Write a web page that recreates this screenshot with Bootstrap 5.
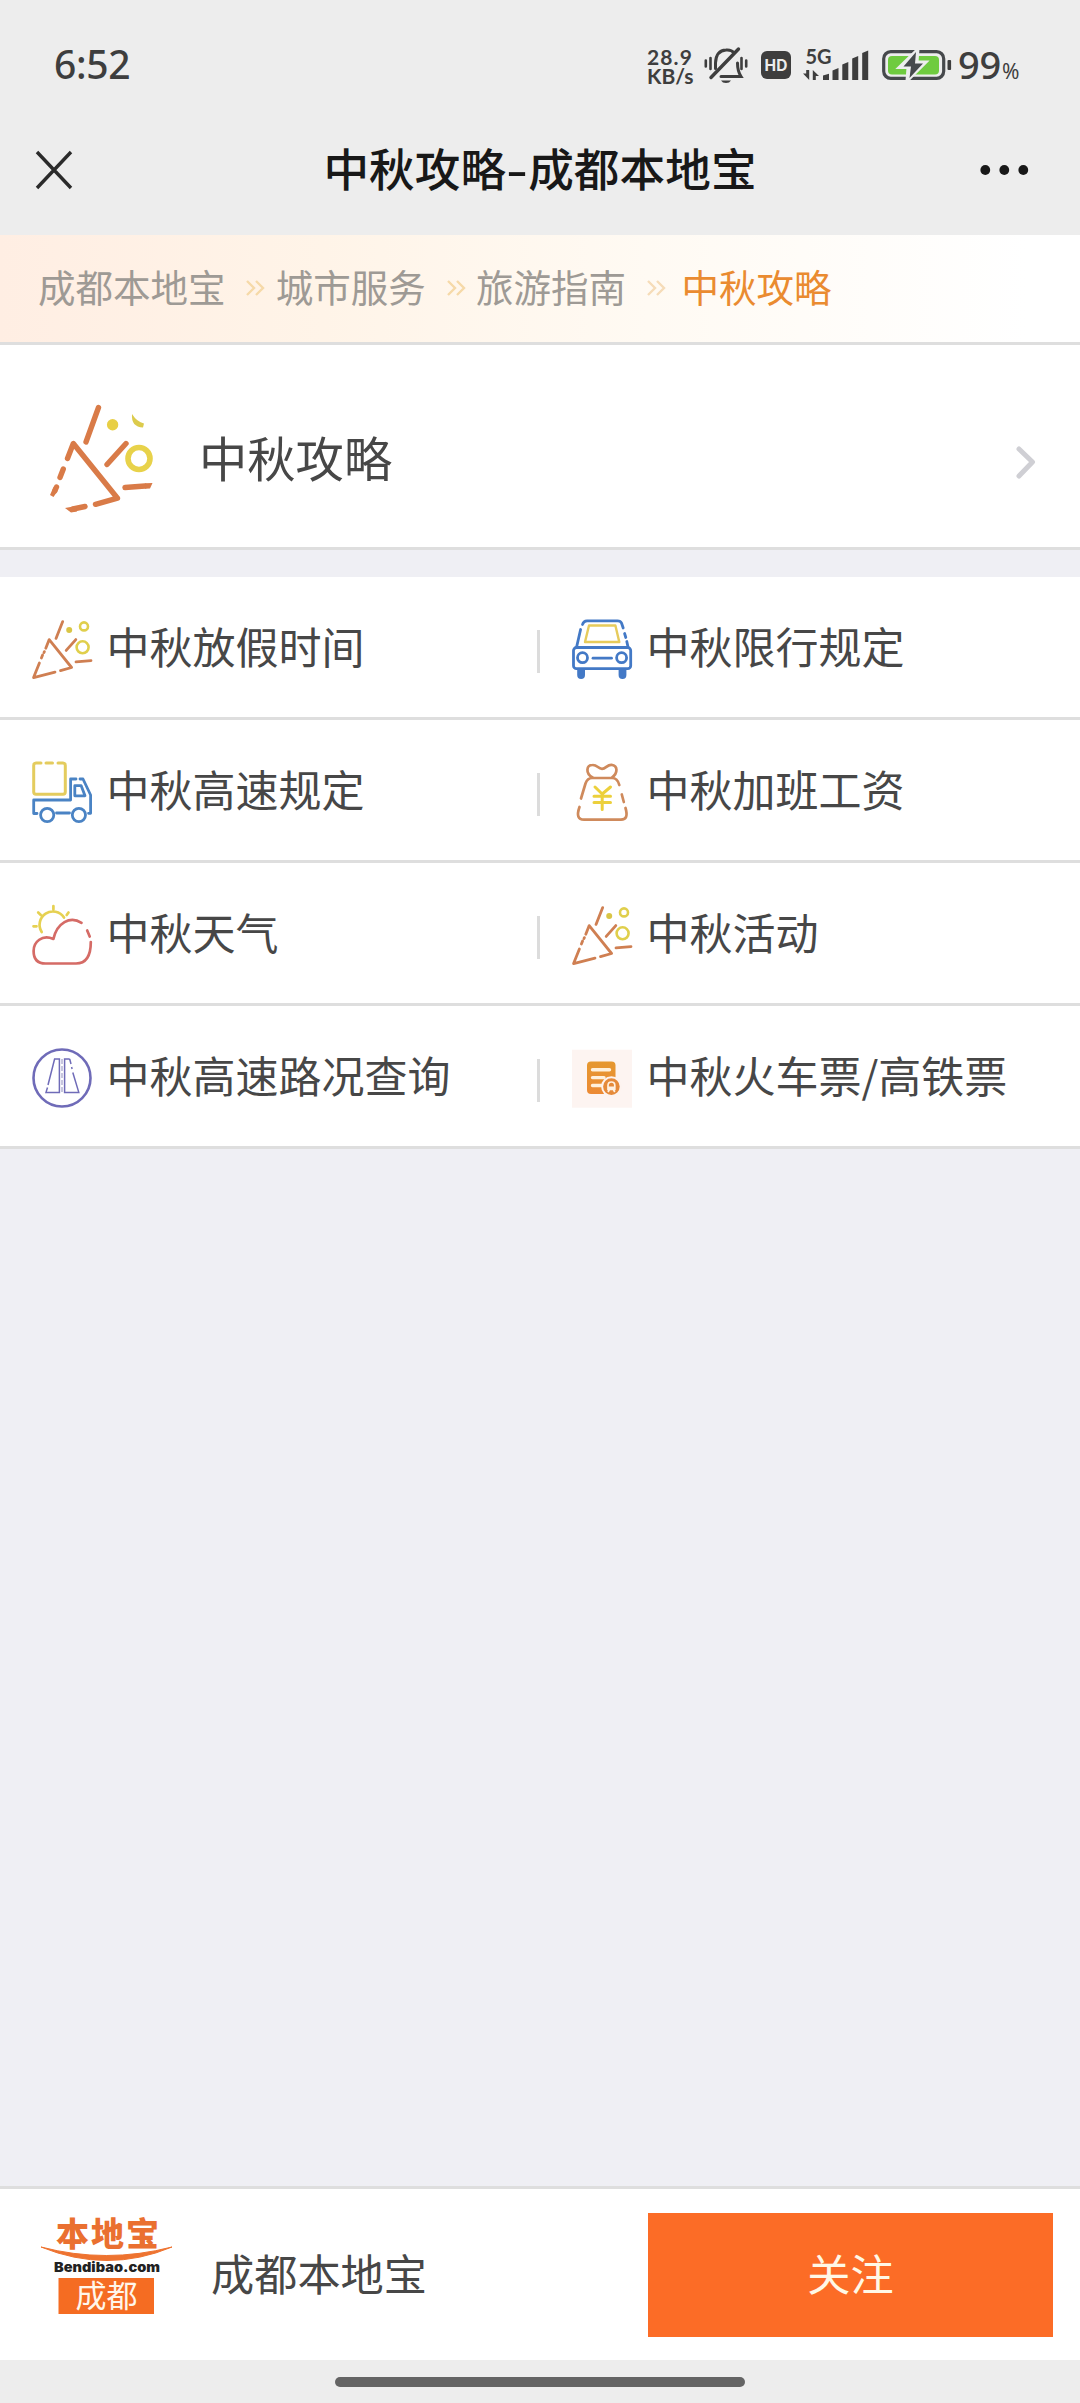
<!DOCTYPE html>
<html lang="zh-CN">
<head>
<meta charset="utf-8">
<title>中秋攻略-成都本地宝</title>
<link href="https://cdn.jsdelivr.net/npm/bootstrap@5.3.0/dist/css/bootstrap.min.css" rel="stylesheet">
<style>
  body{font-family:"Noto Sans CJK SC","Noto Sans",sans-serif;background:#efeff4;color:#474747;width:1080px;height:2403px;overflow:hidden;line-height:1}
  svg{display:block;overflow:visible;flex:none}
  .line-b{border-bottom:3px solid #dedede}
  .topbar{background:#ededed;height:235px}
  .status{height:130px;padding:0 59px 0 54px;color:#3e3e3e;font-family:Lato,"Noto Sans",sans-serif;font-weight:700}
  .clock{font-size:39px;font-family:"Noto Sans",sans-serif;font-weight:500;letter-spacing:-.3px;margin-bottom:3px}
  .speed{font-size:21px;line-height:19px;width:58px;padding-left:1px;padding-top:1px}
  .speed div{height:19px}
  .rate{letter-spacing:1.1px}
  .hd{margin-left:13px}
  .signal{margin-left:12px}
  .battery{margin-left:13px}
  .pct{font-size:38px;margin-left:6px;margin-bottom:2px;font-family:"Noto Sans",sans-serif;font-weight:500;width:63px;white-space:nowrap;letter-spacing:-.3px}
  .pct small{font-size:21px;font-weight:400;margin-left:1px}
  .titlebar{height:80px;padding:0 51px 0 36px}
  .page-title{font-size:45.6px;font-weight:500;color:#181818;letter-spacing:.1px;margin-left:28px}
  .dash{display:inline-block;width:22px;text-align:center;transform:scaleX(1.35)}
  .crumbs{height:110px;padding-left:38px;padding-bottom:2px;font-size:37.5px;color:#9e9a95;background:linear-gradient(90deg,#ffeee3 0,#fff4e8 30%,#fffaf3 60%,#fff 95%)}
  .crumbs svg{margin:0 10.500px 0 20.800px}
  .crumbs .here{color:#ea8b30;margin-left:5px}
  .hero{height:205px;padding:24px 44px 0 48px;font-size:48.3px}
  .hero .name{margin-left:43px}
  .hero .chev{margin-top:7px}
  .gap-strip{height:27px}
  .entry{height:140px;padding-left:32px;font-size:43px;gap:14.500px;white-space:nowrap}
  .entry svg{margin-top:6px}
  .split{width:3px;height:43px;background:#dcdcdc;margin-left:-3px;margin-top:9px}
  .follow{height:174px;border-top:3px solid #dedede;padding:0 27px 0 36px;font-size:43.2px}
  .follow .logo{margin-bottom:17px}
  .follow .name{margin-left:35px}
  .follow .btn{--bs-btn-color:#fff8e6;width:405px;height:124px;background:#fc6c26;font-size:43.2px;border:0}
  .homebar{height:43px;background:#ededed}
  .homebar div{width:410px;height:10px;background:#646464}
  .up{transform:translateY(-1.600px)}
  .up2{transform:translateY(-2px)}
</style>
</head>
<body class="d-flex flex-column">
<svg width="0" height="0" class="position-absolute">
  <symbol id="popper" viewBox="0 0 60 60" overflow="visible">
    <g fill="none" stroke="#cf7f52" stroke-width="2.8" stroke-linecap="round" stroke-linejoin="round">
      <path d="M30.7 1.6 24 18.4M43.8 19.6 34.2 30.4M44 41.8 59 40.6M13.8 28.3 17.2 19.6 39.6 47.5 28.5 50.6M23 52.2 1.6 57.6 7.4 43M9.4 38 10.6 35M12 32.6l.4-1"/>
    </g>
    <circle cx="37.2" cy="10" r="3" fill="#d9c545"/>
    <g fill="none" stroke="#e0cf4c" stroke-width="2.6"><circle cx="52" cy="6.4" r="4"/><circle cx="50.6" cy="27.3" r="6"/></g>
  </symbol>
</svg>

<header class="topbar">
  <div class="status d-flex align-items-center">
    <span class="clock me-auto">6:52</span>
    <div class="speed"><div class="rate">28.9</div><div>KB/s</div></div>
    <svg width="44" height="38" viewBox="0 0 44 38" fill="none" stroke="#3e3e3e" stroke-width="3" stroke-linecap="round">
      <path d="M11.500 22.500V17Q12 4.500 22 4Q27.500 3.500 30 7M33.500 17Q33.500 25 37 30.500H17"/>
      <path d="M7 31.500 34.500 3" stroke-width="3.4"/>
      <path d="M1.800 14.500v6M6.500 12v11M37.500 12v11M42.200 14.500v6" stroke-width="2.600"/>
      <path d="M17 34.500h10Q25.500 37 22 37T17 34.500z" fill="#3e3e3e" stroke="none"/>
    </svg>
    <svg class="hd" width="30" height="28" viewBox="0 0 30 28">
      <rect width="30" height="28" rx="6" fill="#3e3e3e"/>
      <text x="15" y="19.700" font-size="15.500" font-weight="700" fill="#ededed" text-anchor="middle" font-family="Inter,sans-serif">HD</text>
    </svg>
    <svg class="signal" width="66" height="30" viewBox="0 0 66 30" fill="#3e3e3e">
      <text x="2.500" y="14" font-size="20" font-weight="700" textLength="26">5G</text>
      <path d="M6.200 20v10L0 23.500h3.200V20zM9.800 30V20L16 26h-3.200v4zM20 25.500l6-1.800V30h-6zM29.500 20.500l6-2.500V30h-6zM39.300 14.500l6-2.500V30h-6zM49.200 8.500l6-2.500V30h-6zM59.200 3l6-2.500V30h-6z"/>
    </svg>
    <svg class="battery" width="70" height="30" viewBox="0 0 70 30">
      <rect x="1.700" y="1.700" width="60" height="26.600" rx="7" fill="none" stroke="#46494c" stroke-width="3.200"/>
      <rect x="6" y="6" width="51" height="18.500" rx="4" fill="#6fcb3f"/>
      <rect x="65.500" y="10" width="3.600" height="10" rx="1" fill="#3e3e3e"/>
      <path d="M36-1 17 17.500h9L25 31l19-19h-9z" fill="#ededed" stroke="#ededed" stroke-width="3"/>
      <path d="M34 2 21.500 16.500h7.500L27.500 28 41 13.500h-8z" fill="#46494c"/>
    </svg>
    <div class="pct">99<small>%</small></div>
  </div>
  <div class="titlebar d-flex align-items-center justify-content-between">
    <svg width="36" height="36" viewBox="0 0 36 36" stroke="#2b2b2b" stroke-width="3.400"><path d="M1 0 35 36M35 0 1 36"/></svg>
    <div class="page-title up2">中秋攻略<span class="dash">-</span>成都本地宝</div>
    <svg width="49" height="10" viewBox="0 0 49 10" fill="#181818"><circle cx="5.300" cy="5" r="4.900"/><circle cx="24.300" cy="5" r="4.900"/><circle cx="43.300" cy="5" r="4.900"/></svg>
  </div>
</header>

<nav class="crumbs line-b d-flex align-items-center">
  <span class="up">成都本地宝</span>
  <svg width="19" height="16" viewBox="0 0 19 16" fill="none" stroke="#f6d9a8" stroke-width="2.400"><path d="M1 1l7 7-7 7M10 1l7 7-7 7"/></svg>
  <span class="up">城市服务</span>
  <svg width="19" height="16" viewBox="0 0 19 16" fill="none" stroke="#f6d9a8" stroke-width="2.400"><path d="M1 1l7 7-7 7M10 1l7 7-7 7"/></svg>
  <span class="up">旅游指南</span>
  <svg width="19" height="16" viewBox="0 0 19 16" fill="none" stroke="#f6dcb8" stroke-width="2.400"><path d="M1 1l7 7-7 7M10 1l7 7-7 7"/></svg>
  <span class="up here">中秋攻略</span>
</nav>

<a class="hero line-b bg-white d-flex align-items-center text-reset text-decoration-none">
  <svg width="108" height="108" viewBox="0 0 108 108">
    <g fill="none" stroke="#d97b48" stroke-width="5.400" stroke-linejoin="round">
      <path stroke-linecap="round" d="M50.500 3.500 38 38M78 39.500 59 60.500M47.500 100.300 69.500 94.200 25.300 39.500 19.500 54.500M77 83.500 97 82M15.300 65 12 73.500M8.500 83 6.800 87M37 102.500 25 105"/>
    </g>
    <path d="M97 84.700 102 84.500 104.500 79 97 79.300zM5.500 83 2 91 5.500 93 9.500 87zM28 102 17 104 23 108.500 29 107.500z" fill="#d97b48"/>
    <circle cx="64.600" cy="20.700" r="5.700" fill="#e8cf45"/>
    <circle cx="91" cy="54.500" r="11" fill="none" stroke="#e8d24a" stroke-width="5.600"/>
    <path d="M84 10Q89 18 96 19.500L95 23.500Q83 23 84 10z" fill="#dccb4c"/>
  </svg>
  <span class="name up">中秋攻略</span>
  <svg class="chev ms-auto" width="20" height="34" viewBox="0 0 20 34" fill="none" stroke="#cfcfd4" stroke-width="5" stroke-linecap="round" stroke-linejoin="round"><path d="M3 4l13.500 13L3 31"/></svg>
</a>
<div class="gap-strip"></div>

<main class="bg-white">
  <div class="row g-0 line-b">
    <div class="col entry d-flex align-items-center"><svg width="60" height="60"><use href="#popper"/></svg><span class="up">中秋放假时间</span></div>
    <div class="col-6 d-flex align-items-center"><i class="split"></i>
      <div class="entry d-flex align-items-center">
        <svg width="60" height="60" viewBox="0 0 60 60" fill="none" stroke="#4379c6" stroke-width="2.800" stroke-linecap="round" stroke-linejoin="round">
          <path d="M10.500 4.500Q11.500.8 15 .8H45.500Q48.500.8 49.500 3L51.200 8M8.600 9.500 4.600 27M52.600 13.500 53.800 17.500M54.800 21.500 55.800 26"/>
          <rect x="1.500" y="27.500" width="57.200" height="21.200" rx="3"/>
          <circle cx="10.500" cy="37.700" r="5"/><circle cx="49.600" cy="37.700" r="5"/><path d="M21 38.200H39.500"/>
          <path d="M17 5.500H43.400L47.300 22H13z" stroke="#e6cb5c" stroke-width="2.400"/>
          <path d="M5.200 50h7.800v5a3.900 3.900 0 0 1-7.800 0zM46.600 50h7.800v5a3.900 3.900 0 0 1-7.800 0z" fill="#4379c6" stroke="none"/>
        </svg><span class="up">中秋限行规定</span></div>
    </div>
  </div>
  <div class="row g-0 line-b">
    <div class="col entry d-flex align-items-center">
      <svg width="60" height="60" viewBox="0 0 60 60" fill="none" stroke="#4a83c4" stroke-width="2.800" stroke-linecap="round" stroke-linejoin="round">
        <path d="M9 0H4Q1.700 0 1.700 2.500V29Q1.700 31.200 4 31.200H31Q33.300 31.200 33.300 29V2.500Q33.300 0 31 0H26M14 0H20.500" stroke="#e4cc5e" stroke-width="3"/>
        <path d="M5 50.500H1.700V37H38.600V16H44M48 16H51L58.600 32V50.300H56.500M24.500 50H37.500M42.800 22.700H49.200L53 32.800H42.800z"/>
        <circle cx="15.200" cy="52" r="6.600"/><circle cx="46.900" cy="52" r="6.600"/>
      </svg><span class="up">中秋高速规定</span></div>
    <div class="col-6 d-flex align-items-center"><i class="split"></i>
      <div class="entry d-flex align-items-center">
        <svg width="60" height="60" viewBox="0 0 60 60" fill="none" stroke="#cf8a5c" stroke-width="2.700" stroke-linecap="round" stroke-linejoin="round">
          <path d="M20.500 14.500C13 10 14.500 2 20.500 2C25.500 1.800 26 5.800 30 5.800S35 1.500 39.500 1.800C46 2.500 46 10 40 14.500"/>
          <path d="M9 35.500 13.500 20.500Q15.500 15 20 15H40Q45.500 15 47.300 22M49.800 31.500 51.800 39M7.500 44Q3 56.700 12 56.700H49Q57 56.700 53.500 45"/>
          <path d="M23 24 30.200 31 38.500 24M30.200 31V46.500M22 33.200H38.500M22 39.400H38.500" stroke="#ecd03c" stroke-width="3"/>
        </svg><span class="up">中秋加班工资</span></div>
    </div>
  </div>
  <div class="row g-0 line-b">
    <div class="col entry d-flex align-items-center">
      <svg width="60" height="60" viewBox="0 0 60 60" fill="none" stroke="#d56b66" stroke-width="2.700" stroke-linecap="round" stroke-linejoin="round">
        <path d="M9.700 26A13.300 13.300 0 0 1 32 11.500M21.400 0V3.500M6.200 6.500 8.800 9M1.500 20.300H4.500M36.500 6.500 34.700 9" stroke="#e6d152"/>
        <path d="M49.500 16.800C38 9.500 25 17 21.400 33C10 28 1.600 36 1.600 45Q1.600 57.500 13.500 57.500H44Q58.800 57.500 58.800 36M55.200 24.500 57.700 30.500"/>
      </svg><span class="up">中秋天气</span></div>
    <div class="col-6 d-flex align-items-center"><i class="split"></i>
      <div class="entry d-flex align-items-center"><svg width="60" height="60"><use href="#popper"/></svg><span class="up">中秋活动</span></div>
    </div>
  </div>
  <div class="row g-0 line-b">
    <div class="col entry d-flex align-items-center">
      <svg width="60" height="60" viewBox="0 0 60 60" fill="none" stroke="#6f6bb8" stroke-width="2.600">
        <circle cx="30" cy="29" r="28.500"/>
        <g stroke-width="1.500"><path d="M16 36 22.600 10H27.400V43.400H14L15.500 38.500M37.700 10H32.600V43.400H46.800L40.800 23.500M37.700 10 39 15M39.600 18 40.100 20"/><path d="M30 10V43" stroke="#bbb9d6" stroke-width="1.600" stroke-dasharray="5 2"/></g>
      </svg><span class="up">中秋高速路况查询</span></div>
    <div class="col-6 d-flex align-items-center"><i class="split"></i>
      <div class="entry d-flex align-items-center">
        <svg width="60" height="60" viewBox="0 0 60 60">
          <defs><linearGradient id="doc" x1="0" y1="0" x2="0" y2="1"><stop stop-color="#e5982f"/><stop offset="1" stop-color="#ec8a35"/></linearGradient></defs>
          <rect y=".7" width="60" height="58" fill="#fdf4f1"/>
          <rect x="15" y="12.500" width="28.500" height="32.500" rx="4" fill="url(#doc)"/>
          <path d="M20.500 20.800H37.500M20.500 28.600H32M20.500 36.500H29" stroke="#fff1dc" stroke-width="3.400" stroke-linecap="round"/>
          <circle cx="39.400" cy="37.600" r="9.300" fill="#e58a3a" stroke="#fdf3ef" stroke-width="2"/>
          <path d="M36 40.500V36.500Q36 33 39.400 33T42.800 36.500V40.500zM36 43l1.200-2M42.800 43l-1.200-2" fill="none" stroke="#fff1e2" stroke-width="1.700"/><path d="M36 37.500h6.800v3H36z" fill="#fff1e2"/>
        </svg><span class="up">中秋火车票/高铁票</span></div>
    </div>
  </div>
</main>

<footer class="mt-auto">
  <div class="follow bg-white d-flex align-items-center">
    <svg class="logo" width="140" height="102" viewBox="0 0 140 102" font-family="'Noto Sans CJK SC',sans-serif">
      <text x="20" y="31" font-size="33" font-weight="900" fill="#ea7030" textLength="103">本地宝</text>
      <path d="M5 32Q70 49 136 32Q104 45.500 71 45.500T5 32z" fill="#ee7330" stroke="#ee7330"/>
      <text x="18" y="57" font-size="13.500" font-weight="900" font-family="Inter,'Liberation Sans',sans-serif" fill="#222" textLength="106" lengthAdjust="spacingAndGlyphs">Bendibao.com</text>
      <rect x="22.500" y="63" width="95.500" height="36" fill="#f56c22"/>
      <text x="70.500" y="92" font-size="31" fill="#fff6ea" text-anchor="middle">成都</text>
    </svg>
    <span class="name up2">成都本地宝</span>
    <button class="btn ms-auto rounded-0" type="button"><span class="d-block up2">关注</span></button>
  </div>
  <div class="homebar d-flex justify-content-center align-items-center"><div class="rounded-pill"></div></div>
</footer>
<script src="https://cdn.jsdelivr.net/npm/bootstrap@5.3.0/dist/js/bootstrap.bundle.min.js"></script>
</body>
</html>
